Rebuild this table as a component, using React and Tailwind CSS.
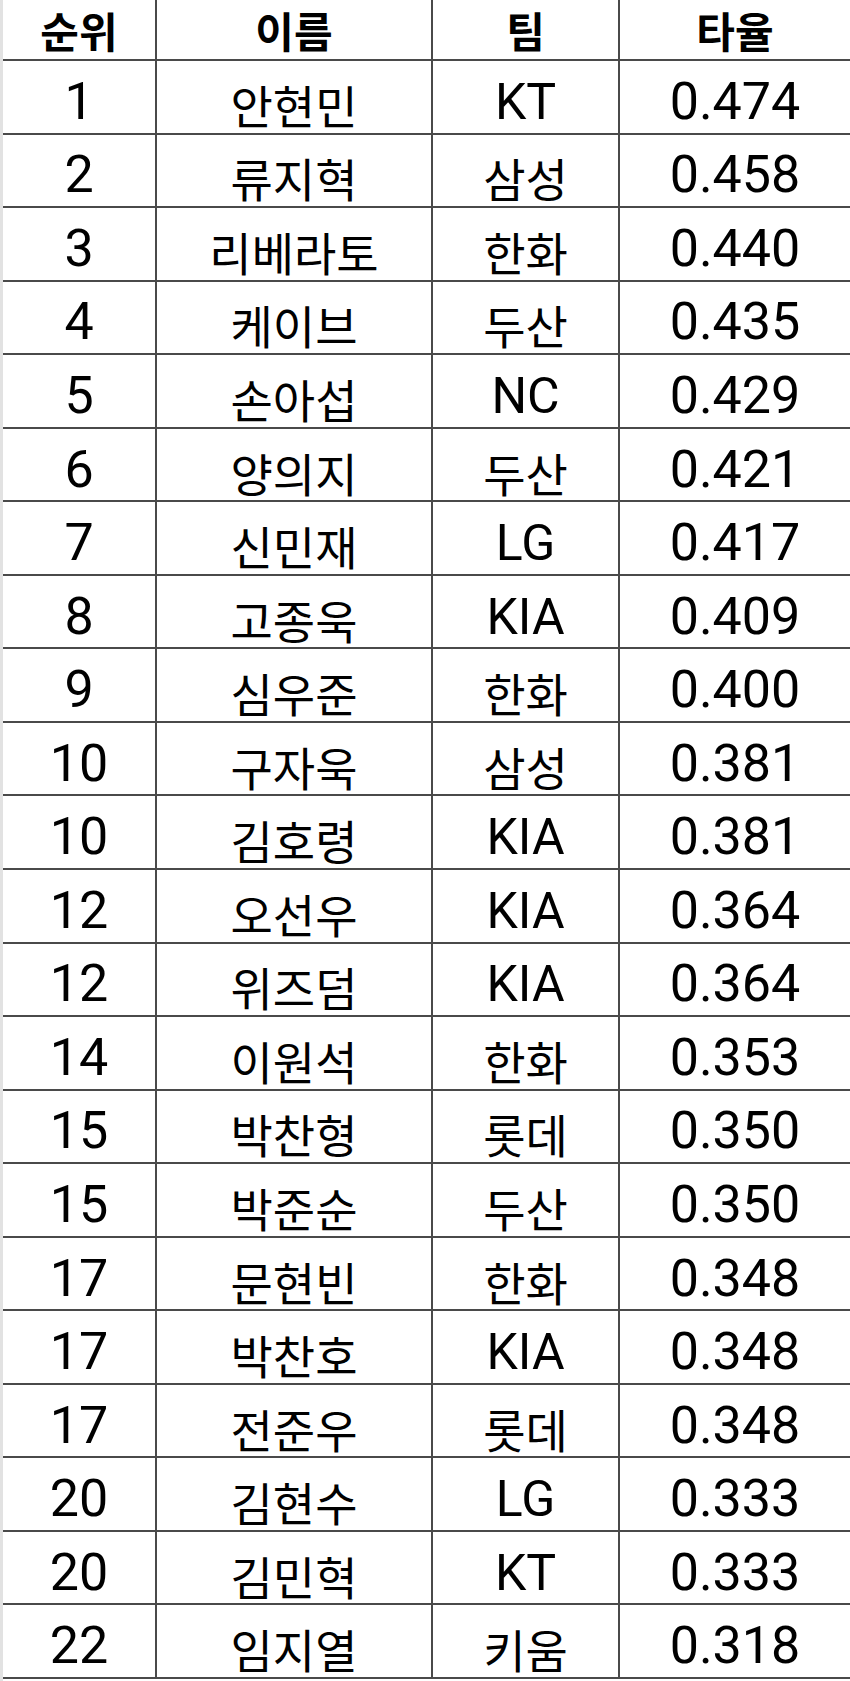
const rows = [
  ['1', '안현민', 'KT', '0.474'],
  ['2', '류지혁', '삼성', '0.458'],
  ['3', '리베라토', '한화', '0.440'],
  ['4', '케이브', '두산', '0.435'],
  ['5', '손아섭', 'NC', '0.429'],
  ['6', '양의지', '두산', '0.421'],
  ['7', '신민재', 'LG', '0.417'],
  ['8', '고종욱', 'KIA', '0.409'],
  ['9', '심우준', '한화', '0.400'],
  ['10', '구자욱', '삼성', '0.381'],
  ['10', '김호령', 'KIA', '0.381'],
  ['12', '오선우', 'KIA', '0.364'],
  ['12', '위즈덤', 'KIA', '0.364'],
  ['14', '이원석', '한화', '0.353'],
  ['15', '박찬형', '롯데', '0.350'],
  ['15', '박준순', '두산', '0.350'],
  ['17', '문현빈', '한화', '0.348'],
  ['17', '박찬호', 'KIA', '0.348'],
  ['17', '전준우', '롯데', '0.348'],
  ['20', '김현수', 'LG', '0.333'],
  ['20', '김민혁', 'KT', '0.333'],
  ['22', '임지열', '키움', '0.318'],
];

const isHangul = (s) => /[\uac00-\ud7a3]/.test(s);

const cell = 'flex justify-center items-center border-[#4a4a4a]';

export default function App() {
  return (
    <div className="w-[850px] h-[1681px] bg-white text-black font-['Roboto','Noto_Sans_CJK_KR',sans-serif] border-l-[3px] border-[#e2e2e2]">
      {/* Header */}
      <div className="grid grid-cols-[154px_276px_187px_1fr] h-[61px] border-b-2 border-[#4a4a4a] font-['Noto_Sans_CJK_KR',sans-serif] font-bold text-[42px] leading-none">
        <div className={cell + ' border-r-2'}>순위</div>
        <div className={cell + ' border-r-2'}>이름</div>
        <div className={cell + ' border-r-2'}>팀</div>
        <div className={cell}>타율</div>
      </div>

      {/* Rows */}
      {rows.map((r, i) => (
        <div
          key={i}
          className="grid grid-cols-[154px_276px_187px_1fr] h-[73.55px] border-b-2 border-[#4a4a4a] leading-none"
        >
          <div className={cell + ' border-r-2 text-[52px] pt-[10px]'}>{r[0]}</div>
          <div className={cell + " border-r-2 text-[46px] pt-[14px] font-['Noto_Sans_CJK_KR',sans-serif]"}>{r[1]}</div>
          {isHangul(r[2]) ? (
            <div className={cell + " border-r-2 text-[46px] pt-[14px] font-['Noto_Sans_CJK_KR',sans-serif]"}>{r[2]}</div>
          ) : (
            <div className={cell + ' border-r-2 text-[50px] pt-[10px]'}>{r[2]}</div>
          )}
          <div className={cell + ' text-[52px] pt-[10px]'}>{r[3]}</div>
        </div>
      ))}
    </div>
  );
}
